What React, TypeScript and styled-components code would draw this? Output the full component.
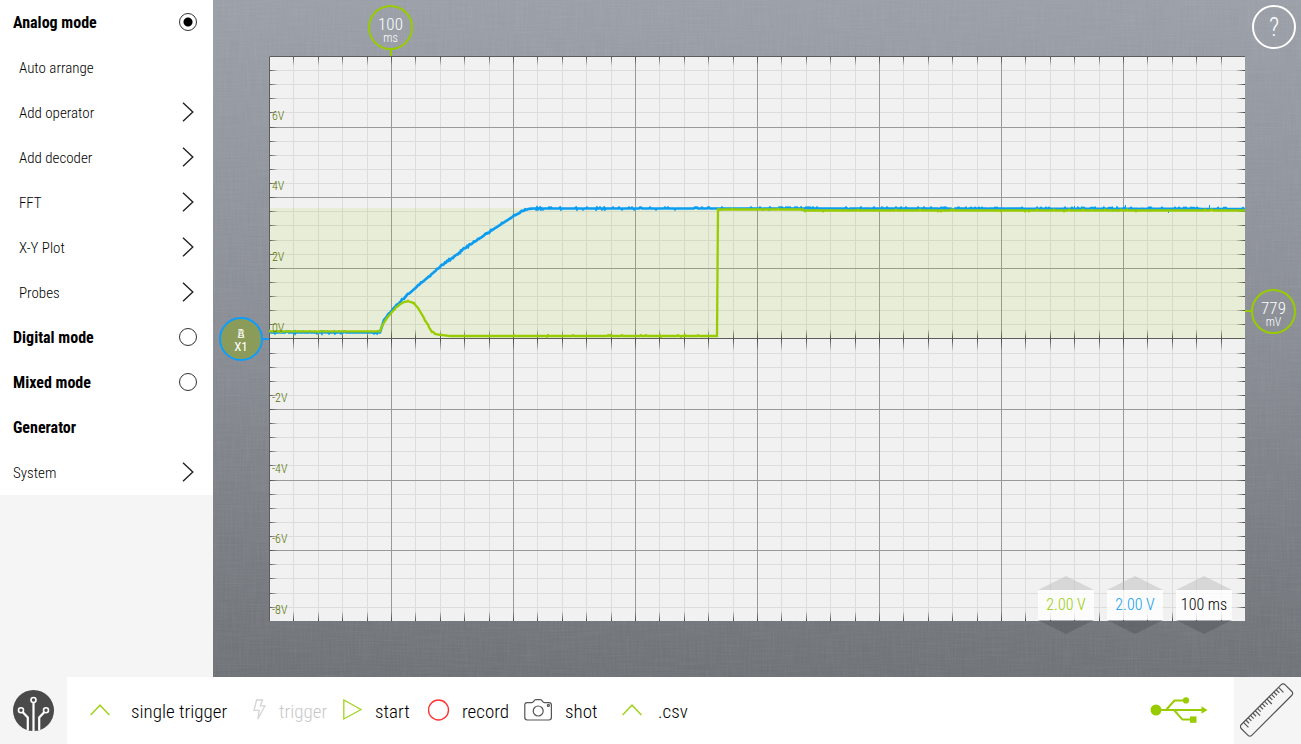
import React from "react";
import styled, { createGlobalStyle } from "styled-components";

const LIME = "#99cc00";
const BLUE = "#0d9df0";
const PANEL = "#f5f5f5";

const GlobalStyle = createGlobalStyle`
  * { box-sizing: border-box; }
  body {
    margin: 0;
    background: ${PANEL};
    color: #000;
    font-family: "Roboto Condensed", "Liberation Sans Narrow", "Open Sans Condensed", "DejaVu Sans Condensed", sans-serif;
  }
  button {
    padding: 0;
    border: 0;
    background: none;
    color: inherit;
    font: inherit;
    text-align: left;
  }
`;

const Page = styled.div`
  display: flex;
  flex-direction: column;
  min-height: 100vh;
`;

const Main = styled.main`
  display: flex;
  flex: 1;
`;

/* ---------- side menu ---------- */

const Sidebar = styled.nav`
  flex: none;
  width: 213px;
  background: ${PANEL};
`;

const Menu = styled.ul`
  margin: 0;
  padding: 0;
  list-style: none;
  background: #fff;
`;

const rowStyles = `
  display: flex;
  align-items: center;
  justify-content: space-between;
  width: 100%;
  height: 45px;
  line-height: 20px;
  > svg, > input { margin-bottom: 2px; }
`;

const ModeRow = styled.label`
  ${rowStyles}
  padding: 0 16px 0 13px;
  font-size: 16px;
  font-weight: 700;
`;

const MenuButton = styled.button<{ $nested?: boolean; $bold?: boolean }>`
  && {
    ${rowStyles}
    padding: 0 19px 0 ${(p) => (p.$nested ? 19 : 13)}px;
    font-size: ${(p) => (p.$bold ? 16 : 15)}px;
    font-weight: ${(p) => (p.$bold ? 700 : 300)};
  }
`;

const Radio = styled.input`
  appearance: none;
  width: 18px;
  height: 18px;
  margin: 0;
  border: 1px solid #333;
  border-radius: 50%;
  background: #fff;
  &:checked {
    background: radial-gradient(circle, #000 0 4px, #fff 5px);
  }
`;

const Chevron = () => (
  <svg width="12" height="20" viewBox="0 0 12 20" fill="none" stroke="#222" strokeWidth="1.4" aria-hidden="true">
    <path d="M1 .7 10.8 10 1 19.3" />
  </svg>
);

/* ---------- scope ---------- */

const Stage = styled.section`
  position: relative;
  display: flex;
  flex: 1;
  min-width: 0;
  padding: 56px;
  background: linear-gradient(#9a9fa8, #878b93 50%, #6b6f74);
`;

const Linen = styled.svg`
  position: absolute;
  inset: 0;
  width: 100%;
  height: 100%;
`;

const Plot = styled.div`
  position: relative;
  flex: 1;
  min-width: 0;
  min-height: 420px;
`;

const Chart = styled.svg`
  position: absolute;
  inset: 0;
  display: block;
  width: 100%;
  height: 100%;
`;

const Scale = styled.ol`
  position: absolute;
  inset: 0 auto 0 3px;
  display: flex;
  flex-direction: column;
  margin: 0;
  padding: 0;
  list-style: none;
  color: #557300;
  font-size: 12px;
  line-height: 14px;
  font-weight: 300;
`;

const ScaleMark = styled.li`
  display: flex;
  flex: 1;
  align-items: flex-end;
  padding-bottom: 4px;
`;

const Knob = styled.button<{ $color: string; $fill?: string }>`
  && {
    position: absolute;
    display: flex;
    flex-direction: column;
    align-items: center;
    justify-content: center;
    width: 45px;
    height: 45px;
    padding-top: 4px;
    border: 2px solid ${(p) => p.$color};
    border-radius: 50%;
    background: ${(p) => p.$fill ?? "transparent"};
    color: #fff;
    font-size: 17px;
    line-height: 16px;
    font-weight: 300;
  }
  small {
    font-size: 12px;
    line-height: 12px;
  }
  &::after {
    content: "";
    position: absolute;
    background: ${(p) => p.$color};
  }
`;

const TimeKnob = styled(Knob)`
  && { left: calc(12.5% - 23px); top: -51px; }
  &::after { left: 20px; top: 42px; width: 2px; height: 7px; }
`;

const LevelKnob = styled(Knob)`
  && { right: -51px; top: calc(45% - 21px); }
  &::after { right: 42px; top: 19px; width: 7px; height: 2px; }
`;

const ChannelKnob = styled(Knob)`
  && { left: -50px; top: calc(50% - 22px); width: 44px; height: 44px; }
  &::after { left: 41px; top: 19px; width: 7px; height: 2px; }
  small {
    font-size: 13px;
    line-height: 14px;
    font-weight: 400;
  }
`;

const ChannelNames = styled.span`
  display: grid;
  justify-items: center;
  font-size: 13px;
  line-height: 12px;
  > * { grid-area: 1 / 1; }
`;

const HelpButton = styled.button`
  && {
    position: absolute;
    top: 5px;
    right: 5px;
    width: 44px;
    height: 44px;
    border: 2px solid #fff;
    border-radius: 50%;
    color: #fff;
    font-size: 25px;
    font-weight: 300;
    text-align: center;
  }
`;

const Steppers = styled.div`
  position: absolute;
  right: 13px;
  bottom: -13px;
  display: flex;
  gap: 13px;
`;

const Stepper = styled.div`
  width: 56px;
`;

const StepButton = styled.button<{ $down?: boolean }>`
  && {
    display: block;
    width: 56px;
    height: 14px;
    background: ${(p) => (p.$down ? "rgba(80, 84, 88, .45)" : "rgba(190, 190, 190, .5)")};
    clip-path: ${(p) => (p.$down ? "polygon(0 0, 100% 0, 50% 100%)" : "polygon(50% 0, 100% 100%, 0 100%)")};
  }
`;

const StepValue = styled.output<{ $color: string }>`
  display: block;
  height: 30px;
  background: rgba(255, 255, 255, .8);
  color: ${(p) => p.$color};
  font-size: 16px;
  line-height: 30px;
  font-weight: 300;
  text-align: center;
  white-space: nowrap;
`;

/* ---------- bottom bar ---------- */

const Footer = styled.footer`
  display: flex;
  flex: none;
  height: 67px;
  background: #fff;
`;

const Corner = styled.button`
  && {
    display: flex;
    flex: none;
    align-items: center;
    justify-content: center;
    width: 67px;
    background: ${PANEL};
  }
`;

const Tools = styled.div`
  display: flex;
  flex: 1;
  padding-left: 23px;
`;

const Tool = styled.button<{ $width: number; $slot: number }>`
  && {
    display: grid;
    grid-template-columns: ${(p) => p.$slot}px 1fr;
    align-items: center;
    width: ${(p) => p.$width}px;
    padding-top: 2px;
    font-size: 19px;
    line-height: 24px;
    font-weight: 300;
    white-space: nowrap;
  }
  > svg { margin-bottom: 3px; }
  &&:disabled { color: #c8c8c8; }
`;

const Link = styled.div`
  display: flex;
  align-items: center;
  padding: 0 26px 2px 0;
`;

const Caret = () => (
  <svg width="20" height="12" viewBox="0 0 20 12" fill="none" stroke="#a5d321" strokeWidth="1.5" aria-hidden="true">
    <path d="M.6 11 10 1.2 19.4 11" />
  </svg>
);

const Bolt = () => (
  <svg width="13" height="22" viewBox="0 0 13 22" fill="none" stroke="#d4d4d4" strokeWidth="1.3" aria-hidden="true">
    <path d="M3.6 1H9.4L7.4 6.800H12L4.800 20 6.200 11.400H1z" />
  </svg>
);

const Play = () => (
  <svg width="20" height="22" viewBox="0 0 20 22" fill="none" stroke="#a5d321" strokeWidth="1.3" aria-hidden="true">
    <path d="M.8 1v19L18 10.500z" />
  </svg>
);

const Record = () => (
  <svg width="22" height="22" viewBox="0 0 22 22" fill="none" stroke="#f33" strokeWidth="1.4" aria-hidden="true">
    <circle cx="10.5" cy="11" r="10" />
  </svg>
);

const Camera = () => (
  <svg width="28" height="22" viewBox="0 0 28 22" fill="none" stroke="#555" strokeWidth="1.2" aria-hidden="true">
    <path d="M3.200 3.600h4.600c2.200 0 1.900-3 4-3h4.600c2.100 0 1.800 3 4 3h4.600a2.400 2.400 0 0 1 2.400 2.400v12.600a2.400 2.400 0 0 1-2.400 2.400H3.200a2.400 2.400 0 0 1-2.400-2.400V6a2.400 2.400 0 0 1 2.400-2.400z" />
    <circle cx="14.200" cy="12" r="5" />
    <circle cx="24.400" cy="6.400" r="1" />
  </svg>
);

const Usb = () => (
  <svg width="58" height="28" viewBox="0 0 58 28" fill={LIME} role="img" aria-label="USB connected">
    <circle cx="6" cy="14" r="5.500" />
    <path d="M51.500 10.300 57.500 14l-6 3.700z" />
    <path d="M5 14h48M16 14l8.500-9.500H35M24 14l8.500 9.600H42" fill="none" stroke={LIME} strokeWidth="2" />
    <circle cx="36" cy="4.400" r="3.100" />
    <path d="M40 20.400h6.500v6.400H40z" />
  </svg>
);

const Logo = () => (
  <svg width="42" height="42" viewBox="0 0 42 42" aria-hidden="true">
    <circle cx="20.500" cy="20.500" r="20.500" fill="#4a4a4a" />
    <g fill="none" stroke="#fff" strokeWidth="1.600">
      <circle cx="20.500" cy="10" r="2.500" />
      <circle cx="8" cy="20.200" r="2.500" />
      <circle cx="33" cy="20.200" r="2.500" />
      <path d="M20.500 13v28" strokeWidth="2.200" />
      <path d="M9.800 22.200 14.800 27.500V40.300M31.200 22.200 26.200 27.500V40.300" strokeWidth="2.200" />
    </g>
  </svg>
);

const RULER_TICKS = Array.from({ length: 16 }, (_, i) => i);

const Ruler = () => (
  <svg width="56" height="56" viewBox="-28 -28 56 56" fill="none" stroke="#555" strokeWidth="1.200" aria-hidden="true">
    <g transform="translate(-1.500 -1) rotate(-45)">
      <rect x="-31" y="-7.500" width="62" height="15" rx="3" />
      {RULER_TICKS.map((i) => (
        <path key={i} d={`M${-25 + i * 3.300} -7.500v${i % 5 === 0 ? 7 : 4.500}`} />
      ))}
    </g>
  </svg>
);

/* ---------- chart data, in plot units of 976 x 565 ---------- */

type Point = [number, number];

const W = 976;
const H = 565;

const CHANNEL_A: Point[] = [
  [0, 275.3], [111, 275.3], [113, 270], [115, 266.500], [118, 262], [123, 256], [128, 251], [131, 248.300], [134, 246.500],
  [137, 245.700], [140, 245.500], [143, 246.300], [146, 248.500], [149, 252], [152, 257], [155, 262], [158, 267.500], [161, 273],
  [163, 276], [166, 278], [171, 278.800], [181, 280], [448, 280], [449, 153.500], [534, 153.500], [535, 154.500], [976, 154.500],
];

const CHANNEL_B: Point[] = [
  [0, 276.500], [111, 276.500], [115, 264], [123, 254.500], [134, 243], [147, 231.500], [171, 211], [195, 193],
  [221, 175.500], [244, 160.500], [253, 155.500], [259, 153], [264, 152.500], [534, 152.500], [976, 153],
];

const valueAt = (points: Point[], x: number) => {
  const i = Math.max(1, points.findIndex((p) => p[0] >= x));
  const [x0, y0] = points[i - 1];
  const [x1, y1] = points[i];
  return y0 + ((y1 - y0) * (x - x0)) / (x1 - x0);
};

/* Samples the curve per pixel with a one-level quantisation jitter. */
const trace = (points: Point[], seed: number, rate: number) => {
  let s = seed;
  const out: string[] = [];
  for (let x = 0; x <= W; x += 1) {
    s = (s * 16807) % 2147483647;
    const r = s / 2147483647;
    const jitter = r < rate ? -0.8 : r > 1 - rate / 2 ? 0.8 : 0;
    out.push(`${x} ${(valueAt(points, x) + jitter).toFixed(1)}`);
  }
  return `M${out.join("L")}`;
};

const TRACE_A = trace(CHANNEL_A, 71, 0.04);
const TRACE_B = trace(CHANNEL_B, 913, 0.16);

const divisions = (size: number) =>
  Array.from({ length: 39 }, (_, i) => ({ at: Math.round(((i + 1) * size) / 40) + 0.5, major: (i + 1) % 5 === 0 }));
const columns = divisions(W);
const rows = divisions(564.8);
const lineColor = (major: boolean) => (major ? "#999" : "#dcdcdc");

const Graph = () => (
  <Chart viewBox={`0 0 ${W} ${H}`} preserveAspectRatio="none" role="img" aria-label="Voltage of channels A and B over time">
    <defs>
      <linearGradient id="fadeRight"><stop stopColor="#444" /><stop offset="1" stopColor="#444" stopOpacity="0" /></linearGradient>
      <linearGradient id="fadeLeft"><stop stopColor="#444" stopOpacity="0" /><stop offset="1" stopColor="#444" /></linearGradient>
      <linearGradient id="fadeDown" x2="0" y2="1"><stop stopColor="#444" /><stop offset="1" stopColor="#444" stopOpacity="0" /></linearGradient>
      <linearGradient id="fadeUp" x2="0" y2="1"><stop stopColor="#444" stopOpacity="0" /><stop offset="1" stopColor="#444" /></linearGradient>
    </defs>
    <rect width={W} height={H} fill="#f1f1f1" />
    {[false, true].map((major) => (
      <g key={String(major)} stroke={lineColor(major)}>
        {columns.filter((c) => c.major === major).map((c) => <path key={`c${c.at}`} d={`M${c.at} 0V${H}`} />)}
        {rows.filter((r) => r.major === major).map((r) => <path key={`r${r.at}`} d={`M0 ${r.at}H${W}`} />)}
      </g>
    ))}
    {rows.map((r) => (
      <g key={r.at}>
        <rect x="0" y={r.at - 0.5} width="9" height="1" fill="url(#fadeRight)" />
        <rect x={W - 9} y={r.at - 0.5} width="9" height="1" fill="url(#fadeLeft)" />
      </g>
    ))}
    {columns.map((c) => (
      <g key={c.at}>
        <rect x={c.at - 0.5} y="0" width="1" height="10" fill="url(#fadeDown)" />
        <rect x={c.at - 0.5} y="273" width="1" height="9" fill="url(#fadeUp)" />
        <rect x={c.at - 0.5} y="283" width="1" height="12" fill="url(#fadeDown)" />
        <rect x={c.at - 0.5} y={H - 10} width="1" height="10" fill="url(#fadeUp)" />
      </g>
    ))}
    <path d={`M0 282.500H${W}M.5 ${H}V.5H${W}`} fill="none" stroke="#5c5c5c" />
    <rect x="1" y="152" width={W - 1} height="130" fill="#99cc00" fillOpacity=".1" />
    <path d={TRACE_B} fill="none" stroke={BLUE} strokeWidth="2.700" />
    <path d="M805.500 150v3M856.500 149v4M940.500 149v4M899.500 153v4" stroke={BLUE} />
    <path d={TRACE_A} fill="none" stroke={LIME} strokeWidth="2.300" />
  </Chart>
);

const MODES = ["Digital mode", "Mixed mode"];
const OPERATIONS = ["Add operator", "Add decoder", "FFT", "X-Y Plot", "Probes"];
const VOLTS = ["6V", "4V", "2V", "0V", "-2V", "-4V", "-6V", "-8V"];
const SCALES = [
  { name: "Channel A scale", value: "2.00 V", color: LIME },
  { name: "Channel B scale", value: "2.00 V", color: BLUE },
  { name: "Time base", value: "100 ms", color: "#000" },
];

export default function App() {
  return (
    <Page>
      <GlobalStyle />
      <Main>
        <Sidebar>
          <Menu>
            <li>
              <ModeRow>
                Analog mode
                <Radio type="radio" name="mode" defaultChecked />
              </ModeRow>
            </li>
            <li><MenuButton $nested>Auto arrange</MenuButton></li>
            {OPERATIONS.map((name) => (
              <li key={name}>
                <MenuButton $nested>{name}<Chevron /></MenuButton>
              </li>
            ))}
            {MODES.map((name) => (
              <li key={name}>
                <ModeRow>
                  {name}
                  <Radio type="radio" name="mode" />
                </ModeRow>
              </li>
            ))}
            <li><MenuButton $bold>Generator</MenuButton></li>
            <li><MenuButton>System<Chevron /></MenuButton></li>
          </Menu>
        </Sidebar>

        <Stage>
          <Linen aria-hidden="true">
            <filter id="weft"><feTurbulence type="fractalNoise" baseFrequency=".03 .7" numOctaves="2" /><feColorMatrix type="saturate" values="0" /></filter>
            <filter id="warp"><feTurbulence type="fractalNoise" baseFrequency=".7 .03" numOctaves="2" /><feColorMatrix type="saturate" values="0" /></filter>
            <rect width="100%" height="100%" filter="url(#weft)" opacity=".09" />
            <rect width="100%" height="100%" filter="url(#warp)" opacity=".09" />
          </Linen>
          <Plot>
            <Graph />
            <Scale>
              {VOLTS.map((v) => <ScaleMark key={v}>{v}</ScaleMark>)}
            </Scale>
            <TimeKnob $color={LIME}>100<small>ms</small></TimeKnob>
            <LevelKnob $color={LIME}>779<small>mV</small></LevelKnob>
            <ChannelKnob $color="#0d9dff" $fill="#8b9c5a">
              <ChannelNames><span>A</span><span>B</span></ChannelNames>
              <small>X1</small>
            </ChannelKnob>
            <Steppers>
              {SCALES.map((s) => (
                <Stepper key={s.name}>
                  <StepButton aria-label={`${s.name} up`} />
                  <StepValue $color={s.color} aria-label={s.name}>{s.value}</StepValue>
                  <StepButton $down aria-label={`${s.name} down`} />
                </Stepper>
              ))}
            </Steppers>
          </Plot>
          <HelpButton>?</HelpButton>
        </Stage>
      </Main>

      <Footer>
        <Corner aria-label="Menu"><Logo /></Corner>
        <Tools>
          <Tool $width={163} $slot={41}><Caret />single trigger</Tool>
          <Tool $width={90} $slot={26} disabled><Bolt />trigger</Tool>
          <Tool $width={85} $slot={32}><Play />start</Tool>
          <Tool $width={96} $slot={34}><Record />record</Tool>
          <Tool $width={98} $slot={41}><Camera />shot</Tool>
          <Tool $width={80} $slot={36}><Caret />.csv</Tool>
        </Tools>
        <Link><Usb /></Link>
        <Corner aria-label="Measure"><Ruler /></Corner>
      </Footer>
    </Page>
  );
}
